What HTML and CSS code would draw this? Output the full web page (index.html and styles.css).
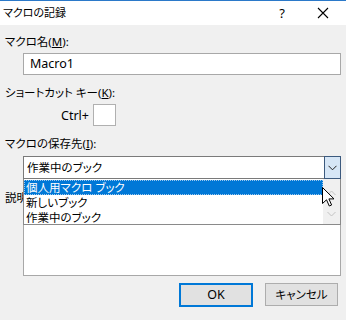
FILE: index.html
```html
<!DOCTYPE html>
<html lang="ja">
<head>
    <meta charset="UTF-8">
    <title>マクロの記録</title>
    <link rel="stylesheet" href="styles.css">
</head>
<body>
    <div class="dialog">
        <div class="titlebar">
            <span class="title">マクロの記録</span>
            <span class="help">?</span>
            <span class="close">
                <svg width="12" height="12" viewBox="0 0 12 12"><path d="M1 1 L11 11 M11 1 L1 11" stroke="#000" stroke-width="1.1" fill="none"/></svg>
            </span>
        </div>

        <div class="content">
            <div class="label first">マクロ名(<u>M</u>):</div>
            <div class="textbox">Macro1</div>

            <div class="label">ショートカット キー(<u>K</u>):</div>
            <div class="shortcut">
                <span class="ctrl">Ctrl+</span>
                <span class="keybox"></span>
            </div>

            <div class="label">マクロの保存先(<u>I</u>):</div>
            <div class="combo-wrap">
                <div class="combo">
                    <span class="combo-text">作業中のブック</span>
                    <span class="combo-btn">
                        <svg width="9" height="6" viewBox="0 0 9 6"><path d="M0.5 0.8 L4.5 4.8 L8.5 0.8" stroke="#222" stroke-width="1" fill="none"/></svg>
                    </span>
                </div>

                <div class="droplist">
                    <div class="items">
                        <div class="item selected">個人用マクロ ブック</div>
                        <div class="item">新しいブック</div>
                        <div class="item">作業中のブック</div>
                    </div>
                    <div class="scrollbar">
                        <svg width="9" height="6" viewBox="0 0 9 6"><path d="M0.5 5 L4.5 1 L8.5 5" stroke="#c2c2c2" stroke-width="1" fill="none"/></svg>
                        <svg width="9" height="6" viewBox="0 0 9 6"><path d="M0.5 1 L4.5 5 L8.5 1" stroke="#c2c2c2" stroke-width="1" fill="none"/></svg>
                    </div>
                    <svg class="cursor" width="13" height="20" viewBox="0 0 13 20"><path d="M0.5 0.5 L0.5 16.5 L4.5 12.8 L7.3 19 L9.6 18 L6.9 11.9 L12 11.9 Z" fill="#fff" stroke="#000" stroke-width="1"/></svg>
                </div>
            </div>

            <div class="label desc">説明(<u>D</u>):</div>
            <div class="textarea"></div>

            <div class="buttons">
                <div class="btn default">OK</div>
                <div class="btn">キャンセル</div>
            </div>
        </div>
    </div>
</body>
</html>
```

FILE: styles.css
```css
body { margin: 0; background: #f0f0f0; font-family: "Noto Sans", "Noto Sans CJK JP", sans-serif; font-size: 11px; color: #000; font-feature-settings: "palt"; }
.dialog { width: 346px; height: 320px; background: #f0f0f0; overflow: hidden; }
.titlebar { height: 24px; border-top: 1px solid #2b79c9; background: #fff; display: flex; align-items: center; padding-left: 3px; }
.title { flex: 1; font-size: 11px; line-height: 16px; }
.help { width: 14px; margin-right: 28px; text-align: center; font-size: 13px; }
.close { width: 12px; margin-right: 17px; display: flex; }
.content { padding: 0 5px; }
.label { line-height: 16px; height: 16px; margin-top: 10px; white-space: nowrap; font-size: 11.5px; }
.label.first { margin-top: 9px; }
.label u { text-underline-offset: 1px; }
.textbox { margin: 3px 0 0 18px; width: 310px; height: 20px; border: 1px solid #a8a8a8; background: #fff; line-height: 20px; padding-left: 6px; font-size: 12.5px; }
.shortcut { display: flex; align-items: center; margin-top: 3px; padding-left: 56px; height: 22px; }
.ctrl { margin-right: 4px; font-size: 12.5px; }
.keybox { width: 21px; height: 20px; border: 1px solid #b0b0b0; background: #fff; }
.combo-wrap { position: relative; margin: 4px 0 0 18px; width: 318px; }
.combo { display: flex; height: 21px; border: 1px solid #7a7a7a; background: #fff; }
.combo-text { flex: 1; line-height: 21px; padding-left: 3px; font-size: 11.5px; }
.combo-btn { width: 15px; border: 1px solid #3c5a7e; background: #d6e6f6; margin: -1px -1px -1px 0; height: 21px; display: flex; align-items: center; justify-content: center; }
.droplist { position: absolute; left: 0; top: 23px; width: 316px; height: 45px; border: 1px solid #8a8a8a; border-top: none; background: #fff; display: flex; z-index: 2; }
.items { flex: 1; padding-top: 1px; }
.item { height: 15px; line-height: 15px; padding-left: 2px; white-space: nowrap; font-size: 11.5px; }
.item.selected { background: #0078d7; color: #fff; outline: 1px dotted #9cc8ee; outline-offset: -1px; }
.scrollbar { width: 17px; background: #f0f0f0; display: flex; flex-direction: column; justify-content: space-between; align-items: center; padding: 11px 0 7px; box-sizing: border-box; }
.cursor { position: absolute; left: 298px; top: 8px; }
.label.desc { margin-top: 11px; width: 19px; overflow: hidden; }
.textarea { margin: 0 0 0 18px; width: 316px; height: 68px; border: 1px solid #a8a8a8; background: #fff; }
.buttons { display: flex; justify-content: flex-end; gap: 12px; margin-top: 7px; padding-right: 3px; }
.btn { width: 71px; height: 21px; border: 1px solid #adadad; background: #e1e1e1; text-align: center; line-height: 21px; font-size: 11.5px; }
.btn.default { width: 70px; height: 20px; border: 2px solid #0078d7; line-height: 20px; font-size: 12.5px; }
```
